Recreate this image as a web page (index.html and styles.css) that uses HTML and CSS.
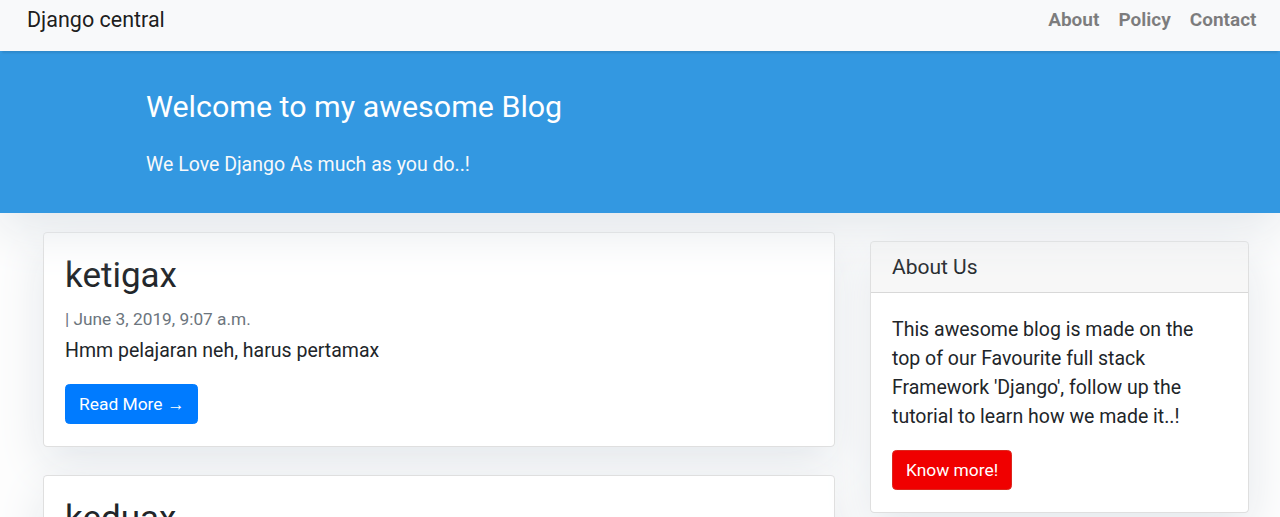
FILE: index.html
```html
<!DOCTYPE html>
<html lang="en">
<head>
<meta charset="utf-8">
<title>Django central</title>
<link rel="stylesheet" href="styles.css">
</head>
<body>
<nav class="navbar">
  <a class="brand" href="#">Django central</a>
  <ul class="nav-links">
    <li><a class="nav-link" href="#">About</a></li>
    <li><a class="nav-link" href="#">Policy</a></li>
    <li><a class="nav-link" href="#">Contact</a></li>
  </ul>
</nav>
<header class="masthead">
  <div class="site-heading">
    <h3 class="site-title">Welcome to my awesome Blog</h3>
    <p class="site-sub">We Love Django As much as you do..!</p>
  </div>
</header>
<main class="content">
  <div class="posts">
    <div class="card post">
      <div class="card-body">
        <h2 class="card-title">ketigax</h2>
        <p class="post-meta">| June 3, 2019, 9:07 a.m.</p>
        <p class="card-text">Hmm pelajaran neh, harus pertamax</p>
        <a href="#" class="btn btn-primary">Read More &rarr;</a>
      </div>
    </div>
    <div class="card post">
      <div class="card-body">
        <h2 class="card-title">keduax</h2>
        <p class="post-meta">| June 3, 2019, 9:06 a.m.</p>
        <p class="card-text">Keduax pelajaran</p>
        <a href="#" class="btn btn-primary">Read More &rarr;</a>
      </div>
    </div>
  </div>
  <aside class="sidebar">
    <div class="card">
      <h5 class="card-header">About Us</h5>
      <div class="card-body">
        <p class="side-text">This awesome blog is made on the top of our Favourite full stack Framework 'Django', follow up the tutorial to learn how we made it..!</p>
        <a href="#" class="btn btn-danger">Know more!</a>
      </div>
    </div>
  </aside>
</main>
</body>
</html>
```
FILE: styles.css
```css
html { overflow: hidden; }
body {
  margin: 0;
  background: #fdfdfd;
  font-family: Roboto, "Liberation Sans", sans-serif;
  color: #212529;
  font-size: 19.5px;
  line-height: 1.5;
}
a { text-decoration: none; }

.navbar {
  position: relative;
  z-index: 2;
  display: flex;
  justify-content: space-between;
  align-items: flex-start;
  height: 51px;
  box-sizing: border-box;
  padding: 3px 14px 0 27px;
  background: #f8f9fa;
  box-shadow: 0 4px 2px -2px rgba(0, 0, 0, 0.1);
}
.brand {
  font-size: 21.5px;
  line-height: 33px;
  color: rgba(0, 0, 0, 0.9);
}
.nav-links {
  display: flex;
  list-style: none;
  margin: 0;
  padding: 0;
}
.nav-link {
  display: block;
  padding: 0 9.5px;
  font-size: 19px;
  line-height: 33px;
  font-weight: 700;
  color: rgba(0, 0, 0, 0.5);
}

.masthead {
  position: relative;
  z-index: 1;
  height: 162px;
  box-sizing: border-box;
  background: #3398E1;
  box-shadow: 0 16px 48px #E3E7EB;
  padding: 37px 0 0 146px;
}
.site-title {
  margin: 0;
  font-size: 30.4px;
  line-height: 37px;
  font-weight: 400;
  color: #fff;
}
.site-sub {
  margin: 26px 0 0;
  font-size: 19.5px;
  line-height: 28px;
  color: #f8f9fa;
}

.content {
  display: flex;
  align-items: flex-start;
  gap: 35px;
  padding: 19px 31px 0 43px;
}
.posts {
  flex: 0 0 792px;
  display: flex;
  flex-direction: column;
  gap: 28px;
}
.sidebar {
  flex: 0 0 379px;
  margin-top: 9px;
}

.card {
  background: #fff;
  border: 1px solid rgba(0, 0, 0, 0.125);
  border-radius: 4.4px;
  box-shadow: 0 16px 48px #E3E7EB;
  overflow: hidden;
}
.card-body {
  padding: 22px 22px 22px 21px;
}
.card-title {
  margin: 0 0 12px;
  font-size: 35px;
  line-height: 42px;
  font-weight: 400;
  color: #212529;
}
.post-meta {
  margin: 0 0 7px;
  font-size: 17.3px;
  line-height: 21px;
  color: #6c757d;
}
.card-text {
  margin: 0 0 19px;
  font-size: 19.5px;
  line-height: 28px;
}
.btn {
  display: inline-block;
  padding: 6px 13px;
  font-size: 17.4px;
  line-height: 26px;
  color: #fff;
  border: 1px solid transparent;
  border-radius: 4.4px;
}
.btn-primary {
  background: #007bff;
  border-color: #007bff;
}
.btn-danger {
  background: #f00000;
  border-color: #dc281e;
}
.card-header {
  margin: 0;
  padding: 12px 22px 12px 21px;
  font-size: 21px;
  line-height: 26px;
  font-weight: 400;
  background: rgba(0, 0, 0, 0.03);
  border-bottom: 1px solid rgba(0, 0, 0, 0.125);
}
.side-text {
  margin: 0 0 19px;
  font-size: 19.5px;
  line-height: 29px;
}
```
